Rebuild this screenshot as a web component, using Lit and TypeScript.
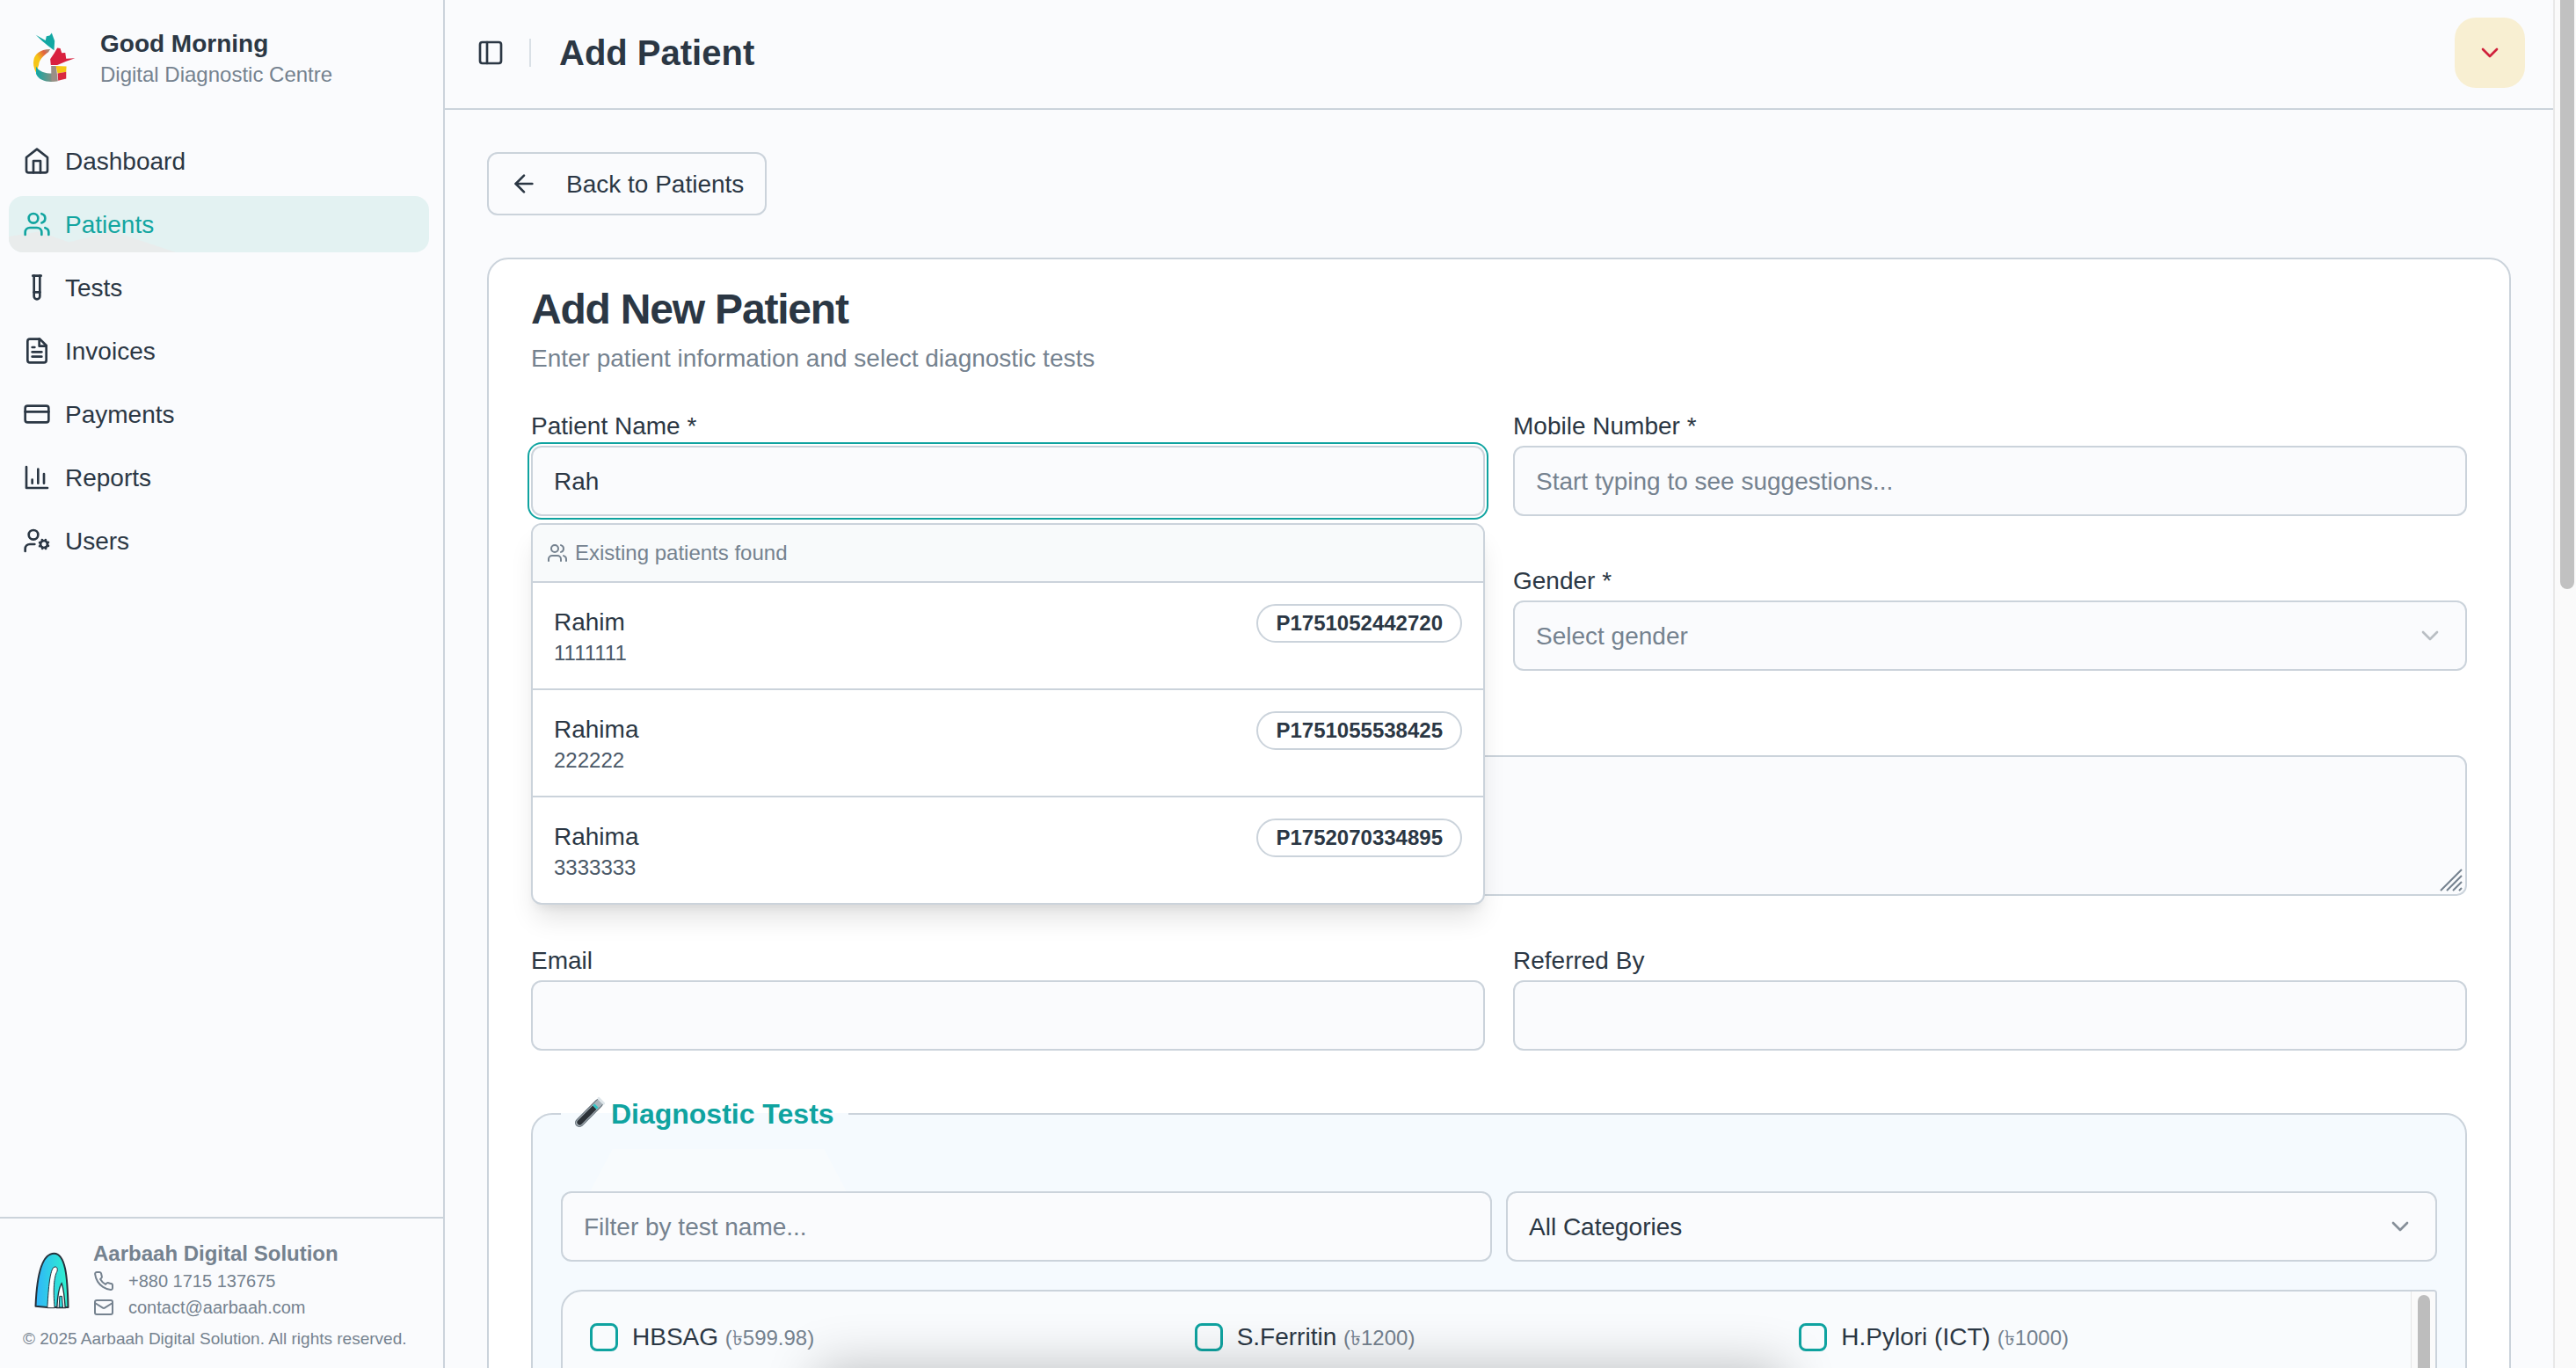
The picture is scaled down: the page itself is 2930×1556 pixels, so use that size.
import { LitElement, html, css, svg } from "lit";
import { customElement } from "lit/decorators.js";

const ICONS: Record<string, unknown> = {
  home: svg`<path d="m3 9 9-7 9 7v11a2 2 0 0 1-2 2H5a2 2 0 0 1-2-2z"/><polyline points="9 22 9 12 15 12 15 22"/>`,
  users: svg`<path d="M16 21v-2a4 4 0 0 0-4-4H6a4 4 0 0 0-4 4v2"/><circle cx="9" cy="7" r="4"/><path d="M22 21v-2a4 4 0 0 0-3-3.87"/><path d="M16 3.13a4 4 0 0 1 0 7.75"/>`,
  tube: svg`<path d="M14.5 2v17.5c0 1.4-1.1 2.5-2.5 2.5s-2.5-1.1-2.5-2.5V2"/><path d="M8.5 2h7"/><path d="M14.5 16h-5"/>`,
  file: svg`<path d="M14.5 2H6a2 2 0 0 0-2 2v16a2 2 0 0 0 2 2h12a2 2 0 0 0 2-2V7.5L14.5 2z"/><polyline points="14 2 14 8 20 8"/><path d="M16 13H8"/><path d="M16 17H8"/><path d="M10 9H8"/>`,
  card: svg`<rect x="2" y="5" width="20" height="14" rx="2"/><line x1="2" y1="10" x2="22" y2="10"/>`,
  chart: svg`<path d="M3 3v18h18"/><path d="M18 17V9"/><path d="M13 17V5"/><path d="M8 17v-3"/>`,
  usercog: svg`<circle cx="18" cy="15" r="3"/><circle cx="9" cy="7" r="4"/><path d="M10 15H6a4 4 0 0 0-4 4v2"/><path d="m21.7 16.4-.9-.3"/><path d="m15.2 13.9-.9-.3"/><path d="m16.6 18.7.3-.9"/><path d="m19.1 12.2.3-.9"/><path d="m19.6 18.7-.4-1"/><path d="m16.8 12.3-.4-1"/><path d="m14.3 16.6 1-.4"/><path d="m20.7 13.8 1-.4"/>`,
  panel: svg`<rect x="3" y="3" width="18" height="18" rx="2"/><path d="M9 3v18"/>`,
  arrow: svg`<path d="m12 19-7-7 7-7"/><path d="M19 12H5"/>`,
  chevron: svg`<path d="m6 9 6 6 6-6"/>`,
  phone: svg`<path d="M22 16.92v3a2 2 0 0 1-2.18 2 19.79 19.79 0 0 1-8.63-3.07 19.5 19.5 0 0 1-6-6 19.79 19.79 0 0 1-3.07-8.67A2 2 0 0 1 4.11 2h3a2 2 0 0 1 2 1.72 12.84 12.84 0 0 0 .7 2.81 2 2 0 0 1-.45 2.11L8.09 9.91a16 16 0 0 0 6 6l1.27-1.27a2 2 0 0 1 2.11-.45 12.84 12.84 0 0 0 2.81.7A2 2 0 0 1 22 16.92z"/>`,
  mail: svg`<rect x="2" y="4" width="20" height="16" rx="2"/><path d="m22 7-8.97 5.7a1.94 1.94 0 0 1-2.06 0L2 7"/>`,
};

const icon = (name: string, cls = "") => html`<svg class="icon ${cls}" viewBox="0 0 24 24" fill="none" stroke="currentColor" stroke-width="2" stroke-linecap="round" stroke-linejoin="round">${ICONS[name]}</svg>`;

const NAV = [
  ["home", "Dashboard"],
  ["users", "Patients"],
  ["tube", "Tests"],
  ["file", "Invoices"],
  ["card", "Payments"],
  ["chart", "Reports"],
  ["usercog", "Users"],
];

const MATCHES = [
  ["Rahim", "1111111", "P1751052442720"],
  ["Rahima", "222222", "P1751055538425"],
  ["Rahima", "3333333", "P1752070334895"],
];

const TESTS = [
  ["HBSAG", "(৳599.98)"],
  ["S.Ferritin", "(৳1200)"],
  ["H.Pylori (ICT)", "(৳1000)"],
];

@customElement("app-root")
export class AppRoot extends LitElement {
  static styles = css`
    :host {
      display: flex;
      position: relative;
      height: 100vh;
      overflow: hidden;
      background: #fafbfd;
      color: #2b3744;
      font-family: "Liberation Sans", Arial, "DejaVu Sans", sans-serif;
      font-size: 28px;
      --muted: #75828f;
      --line: #cbd3db;
      --teal: #0fa3a0;
    }
    * { box-sizing: border-box; }
    .icon { width: 32px; height: 32px; flex: none; display: block; }
    .icon.small { width: 24px; height: 24px; }

    .sidebar {
      width: 506px;
      flex: none;
      display: flex;
      flex-direction: column;
      border-right: 2px solid var(--line);
    }
    .brand { display: flex; align-items: center; padding: 29px 0 0 33px; gap: 24px; }
    .brand-logo { width: 57px; height: 64px; flex: none; }
    .brand-title { font-size: 28px; line-height: 41px; height: 40px; font-weight: 700; }
    .brand-sub { font-size: 24px; line-height: 32px; color: var(--muted); }
    .nav { display: flex; flex-direction: column; gap: 8px; padding: 50px 16px 0 10px; }
    .nav-item {
      position: relative;
      height: 64px;
      display: flex;
      align-items: center;
      gap: 16px;
      padding-left: 16px;
      border-radius: 16px;
      overflow: hidden;
    }
    .nav-item.active { background: #e3f2f2; color: #12a5a0; }
    .nav-item.active::before {
      content: "";
      position: absolute;
      left: 0;
      bottom: 0;
      width: 190px;
      height: 24px;
      background: #e9ecec;
      clip-path: polygon(0 25%, 18% 2%, 36% 52%, 62% 0, 100% 100%, 0 100%);
    }
    .nav-item .icon, .nav-item span { position: relative; }
    .nav-item span { padding-top: 2px; }

    .foot {
      margin-top: auto;
      border-top: 2px solid var(--line);
      padding: 24px 0 19px 26px;
      color: var(--muted);
    }
    .foot-row { display: flex; align-items: center; gap: 26px; padding-left: 12px; }
    .foot-logo { width: 42px; height: 66px; flex: none; }
    .foot-name { font-size: 24px; line-height: 32px; font-weight: 700; }
    .foot-contact { display: flex; align-items: center; gap: 16px; height: 30px; font-size: 20px; }
    .copy { font-size: 19px; line-height: 28px; margin-top: 7px; }

    .main { flex: 1; min-width: 0; display: flex; flex-direction: column; }
    .topbar {
      height: 125px;
      flex: none;
      display: flex;
      align-items: center;
      padding: 0 32px 3px 36px;
      border-bottom: 2px solid var(--line);
    }
    .sep { width: 2px; height: 32px; background: #d9e0e6; margin: 0 32px 0 28px; }
    .topbar h1 { margin: 0; font-size: 40px; line-height: 56px; font-weight: 700; flex: 1; }
    .menu {
      width: 80px;
      height: 80px;
      border-radius: 24px;
      background: #f8efd2;
      color: #d0213b;
      display: flex;
      align-items: center;
      justify-content: center;
    }

    .content { flex: 1; min-height: 0; overflow: hidden; padding: 48px; }
    .back {
      width: 318px;
      height: 72px;
      display: flex;
      align-items: center;
      gap: 32px;
      padding-left: 24px;
      border: 2px solid var(--line);
      border-radius: 12px;
      margin-bottom: 48px;
    }
    .back span { padding-top: 2px; }

    .panel {
      background: #fff;
      border: 2px solid var(--line);
      border-radius: 24px;
      padding: 32px 48px 48px;
    }
    .panel h2 { margin: 0; font-size: 48px; line-height: 50px; height: 48px; font-weight: 700; letter-spacing: -1.2px; }
    .panel-sub { margin-top: 12px; line-height: 42px; height: 40px; color: var(--muted); }

    .form { display: grid; grid-template-columns: 1fr 1fr; column-gap: 32px; row-gap: 59px; margin-top: 43px; }
    .field { position: relative; display: flex; flex-direction: column; gap: 9px; }
    .wide { grid-column: span 2; }
    .label { height: 28px; line-height: 30px; }
    .control {
      height: 80px;
      width: 100%;
      border: 2px solid var(--line);
      border-radius: 12px;
      background: #fafbfd;
      padding: 2px 24px 0;
      font: inherit;
      color: inherit;
      outline: none;
      display: flex;
      align-items: center;
      justify-content: space-between;
    }
    input.control::placeholder { color: var(--muted); opacity: 1; }
    .control.focus { box-shadow: 0 0 0 2px #fff, 0 0 0 4px var(--teal); }
    .placeholder { color: var(--muted); }
    .chev-faint, .chev-dark { margin-top: -2px; }
    .chev-faint { color: #b9bec3; }
    .chev-dark { color: #868f99; }
    .area { height: 160px; position: relative; }
    .grip { position: absolute; right: 3px; bottom: 3px; width: 26px; height: 26px; stroke: var(--muted); stroke-width: 2; }

    .suggest {
      position: absolute;
      z-index: 5;
      top: calc(100% + 8px);
      left: 0;
      right: 0;
      background: #fff;
      border: 2px solid var(--line);
      border-radius: 12px;
      box-shadow: 0 20px 30px -6px rgba(0, 0, 0, .12), 0 8px 12px -6px rgba(0, 0, 0, .08);
      overflow: hidden;
    }
    .suggest-head {
      height: 66px;
      display: flex;
      align-items: center;
      gap: 8px;
      padding-left: 16px;
      background: #f8fafb;
      border-bottom: 2px solid var(--line);
      color: var(--muted);
      font-size: 24px;
    }
    .match {
      height: 122px;
      padding: 24px;
      display: flex;
      justify-content: space-between;
      align-items: flex-start;
      border-bottom: 2px solid var(--line);
    }
    .match:last-child { border-bottom: 0; height: 120px; }
    .match-name { line-height: 41px; height: 40px; }
    .match-phone { font-size: 24px; line-height: 32px; color: #4a5867; }
    .pill {
      border: 2px solid var(--line);
      border-radius: 999px;
      padding: 4px 20px;
      font-size: 24px;
      line-height: 32px;
      font-weight: 700;
    }

    .tests {
      position: relative;
      margin: 48px 0 0;
      min-width: 0;
      border: 2px solid var(--line);
      border-radius: 24px;
      background: #f5fafe;
      padding: 64px 32px 32px;
    }
    .tests legend {
      padding: 0 16px;
      height: 48px;
      line-height: 48px;
      font-size: 32px;
      font-weight: 700;
      color: var(--teal);
    }
    .tube { width: 32px; height: 32px; vertical-align: -4px; overflow: visible; }
    .ghost {
      position: absolute;
      left: 44px;
      top: 16px;
      width: 334px;
      height: 88px;
      background: #f8fbfd;
      clip-path: polygon(14% 0, 86% 0, 100% 100%, 0 100%);
    }
    .filters { position: relative; display: grid; grid-template-columns: 1fr 1fr; gap: 16px; margin-bottom: 32px; }
    .list {
      display: flex;
      height: 420px;
      border: 2px solid var(--line);
      border-radius: 24px 4px 4px 24px;
      background: #f9fbfd;
      overflow: hidden;
    }
    .list-grid {
      flex: 1;
      min-width: 0;
      display: grid;
      grid-template-columns: repeat(3, 1fr);
      column-gap: 24px;
      align-content: start;
      padding: 36px 32px 32px 31px;
    }
    .check-row { display: flex; align-items: center; gap: 16px; height: 32px; white-space: nowrap; }
    .check-text { padding-top: 4px; }
    .box { width: 32px; height: 32px; flex: none; border: 3px solid var(--teal); border-radius: 8px; }
    .price { font-size: 24px; color: var(--muted); }
    .list-bar { width: 28px; flex: none; background: #fafafa; border-left: 1px solid #e6e6e6; padding: 4px 6px 0 7px; }
    .list-thumb { height: 200px; background: #bdbdbd; border-radius: 7px; }

    .glow {
      position: absolute;
      z-index: 6;
      left: 960px;
      width: 1040px;
      top: 1585px;
      height: 100px;
      box-shadow: 0 0 60px 30px rgba(0, 0, 0, .24);
    }
    .pagebar {
      width: 26px;
      flex: none;
      background: #fafafa;
      border-left: 2px solid #e8e8e8;
      padding: 0 2px 0 6px;
    }
    .pagethumb { height: 670px; background: #c1c1c1; border-radius: 0 0 8px 8px; }
  `;

  private renderBrandLogo() {
    return html`<svg class="brand-logo" viewBox="100 100 170 190">
      <defs>
        <linearGradient id="rib" x1="0" y1="1" x2="1" y2="0">
          <stop offset="0.45" stop-color="#f6c516"/><stop offset="0.75" stop-color="#e2613f"/><stop offset="1" stop-color="#8d9a8f"/>
        </linearGradient>
        <linearGradient id="mix" x1="0" y1="0" x2="1" y2="0">
          <stop offset="0" stop-color="#0ea8a5"/><stop offset="1" stop-color="#a88a78"/>
        </linearGradient>
      </defs>
      <path fill="#12a7a3" d="M123 120 L156 138 L159 124 L170 122 L177 113 L187 140 L185 172 L165 157 L146 141 Z"/>
      <path fill="url(#rib)" d="M116 205 C118 185 140 167 172 168 L166 178 C148 190 134 205 133 222 L124 248 C116 232 113 218 116 205 Z"/>
      <path fill="url(#mix)" d="M124 226 C134 245 158 252 190 250 L196 276 C170 282 134 278 124 252 Z"/>
      <path fill="#9a8f86" d="M175 225 L192 225 L198 276 L176 276 Z"/>
      <path fill="#d9213f" d="M172 202 L186 181 L196 164 L206 165 L211 181 L223 180 L226 200 L256 199 L226 209 L196 222 L174 222 Z"/>
      <path fill="#f7c713" d="M191 225 L227 226 L226 245 L197 250 Z"/>
      <path fill="#d9293f" d="M197 250 L226 245 L226 268 L199 275 Z"/>
    </svg>`;
  }

  private renderFootLogo() {
    return html`<svg class="foot-logo" viewBox="50 38 125 198">
      <defs>
        <linearGradient id="arch" x1="0" y1="0" x2="1" y2="0">
          <stop offset="0" stop-color="#30b4fa"/><stop offset="1" stop-color="#2ff2cc"/>
        </linearGradient>
      </defs>
      <path fill="url(#arch)" stroke="#26303a" stroke-width="6" stroke-linejoin="round" d="M57 226 C60 150 72 46 120 46 C160 46 166 130 168 230 L135 230 L97 230 Z"/>
      <path fill="#fff" stroke="#26303a" stroke-width="3" d="M97 232 C100 180 104 110 118 94 C128 88 134 96 130 108 C120 125 116 170 122 232 Z"/>
      <path fill="#fff" stroke="#26303a" stroke-width="4" d="M130 232 C132 190 138 160 146 148 C152 165 156 200 158 232 Z"/>
      <path fill="#2fd8d8" stroke="#26303a" stroke-width="3" d="M137 230 L139 192 L147 192 L150 230 Z"/>
    </svg>`;
  }

  render() {
    return html`
      <aside class="sidebar">
        <div class="brand">
          ${this.renderBrandLogo()}
          <div>
            <div class="brand-title">Good Morning</div>
            <div class="brand-sub">Digital Diagnostic Centre</div>
          </div>
        </div>
        <nav class="nav">
          ${NAV.map(([ic, label]) => html`<div class="nav-item ${label === "Patients" ? "active" : ""}">${icon(ic)}<span>${label}</span></div>`)}
        </nav>
        <div class="foot">
          <div class="foot-row">
            ${this.renderFootLogo()}
            <div>
              <div class="foot-name">Aarbaah Digital Solution</div>
              <div class="foot-contact">${icon("phone", "small")}<span>+880 1715 137675</span></div>
              <div class="foot-contact">${icon("mail", "small")}<span>contact@aarbaah.com</span></div>
            </div>
          </div>
          <div class="copy">© 2025 Aarbaah Digital Solution. All rights reserved.</div>
        </div>
      </aside>

      <div class="main">
        <header class="topbar">
          ${icon("panel")}
          <div class="sep"></div>
          <h1>Add Patient</h1>
          <div class="menu">${icon("chevron")}</div>
        </header>
        <div class="content">
          <div class="back">${icon("arrow")}<span>Back to Patients</span></div>
          <section class="panel">
            <h2>Add New Patient</h2>
            <div class="panel-sub">Enter patient information and select diagnostic tests</div>
            <div class="form">
              <div class="field">
                <div class="label">Patient Name *</div>
                <input class="control focus" value="Rah" />
                <div class="suggest">
                  <div class="suggest-head">${icon("users", "small")}<span>Existing patients found</span></div>
                  ${MATCHES.map(([n, p, id]) => html`<div class="match">
                    <div><div class="match-name">${n}</div><div class="match-phone">${p}</div></div>
                    <div class="pill">${id}</div>
                  </div>`)}
                </div>
              </div>
              <div class="field">
                <div class="label">Mobile Number *</div>
                <input class="control" placeholder="Start typing to see suggestions..." />
              </div>
              <div class="field"><div class="label"></div><div class="control"></div></div>
              <div class="field">
                <div class="label">Gender *</div>
                <div class="control"><span class="placeholder">Select gender</span>${icon("chevron", "chev-faint")}</div>
              </div>
              <div class="field wide">
                <div class="label"></div>
                <div class="control area">
                  <svg class="grip" viewBox="0 0 26 26"><path d="M1 25 25 1M8 25 25 8M15 25 25 15M22 25 25 22"/></svg>
                </div>
              </div>
              <div class="field"><div class="label">Email</div><input class="control" /></div>
              <div class="field"><div class="label">Referred By</div><input class="control" /></div>
            </div>
            <fieldset class="tests">
              <legend><svg class="tube" viewBox="0 0 32 32">
                <g transform="rotate(45 16 16)">
                  <rect x="11.5" y="-4" width="9" height="40" rx="4.5" fill="#aab4bb" stroke="#5f6b74" stroke-width="1"/>
                  <path d="M13 7 H19 V31 a3 3 0 0 1 -6 0 Z" fill="#2c3238"/>
                  <rect x="13" y="4" width="6" height="3" fill="#2fc4c4"/>
                  <rect x="10.5" y="-5" width="11" height="3" rx="1.5" fill="#dfe6ea"/>
                </g>
              </svg> Diagnostic Tests</legend>
              <div class="ghost"></div>
              <div class="filters">
                <input class="control" placeholder="Filter by test name..." />
                <div class="control"><span>All Categories</span>${icon("chevron", "chev-dark")}</div>
              </div>
              <div class="list">
                <div class="list-grid">
                  ${TESTS.map(([n, p]) => html`<div class="check-row"><div class="box"></div><div class="check-text">${n} <span class="price">${p}</span></div></div>`)}
                </div>
                <div class="list-bar"><div class="list-thumb"></div></div>
              </div>
            </fieldset>
          </section>
        </div>
      </div>
      <div class="pagebar"><div class="pagethumb"></div></div>
      <div class="glow"></div>
    `;
  }
}
